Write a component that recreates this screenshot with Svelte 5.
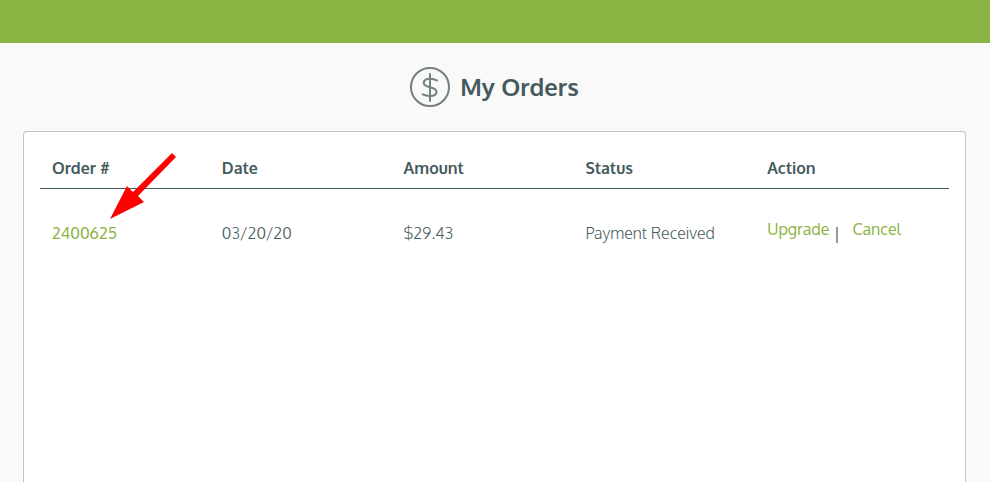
<script>
  const columns = ["Order #", "Date", "Amount", "Status", "Action"];

  const orders = [
    {
      number: "2400625",
      date: "03/20/20",
      amount: "$29.43",
      status: "Payment Received",
    },
  ];
</script>

<div class="page">
  <header class="topbar"></header>

  <main>
    <div class="title">
      <svg width="40" height="40" viewBox="0 0 40 40" aria-hidden="true">
        <circle cx="20" cy="20" r="19" />
        <path d="M20 7v27" />
        <path
          d="M27 13.500c-2-1.200-4.500-1.700-7-1.700-4 0-6.300 1.500-6.300 4 0 2.800 2.500 3.600 6.300 4.400s6.500 1.900 6.500 4.700c0 2.600-2.500 4-6.500 4-2.700 0-5.300-.5-7.300-1.600"
        />
      </svg>
      <h1>My Orders</h1>
    </div>

    <section class="panel">
      <table>
        <thead>
          <tr>
            {#each columns as column}
              <th scope="col">{column}</th>
            {/each}
          </tr>
        </thead>
        <tbody>
          {#each orders as order}
            <tr>
              <td>
                <a href="#order">{order.number}</a>
                <!-- Points at the order link -->
                <svg class="arrow" width="68" height="68" viewBox="0 0 68 68" aria-hidden="true">
                  <path d="M63 0l4 4-38 39 6 6-34 17 17-33 6 6z" />
                </svg>
              </td>
              <td>{order.date}</td>
              <td>{order.amount}</td>
              <td>{order.status}</td>
              <td>
                <div class="actions">
                  <a href="#upgrade">Upgrade</a>
                  <span class="divider"></span>
                  <a href="#cancel">Cancel</a>
                </div>
              </td>
            </tr>
          {/each}
        </tbody>
      </table>
    </section>
  </main>
</div>

<style>
  :global(body) {
    margin: 0;
    background: #f9f9f9;
  }

  .page {
    display: flex;
    flex-direction: column;
    min-height: 100vh;
    color: #455a5c;
    font-family: Oxygen, "Open Sans", "Noto Sans", sans-serif;
    font-size: 16px;
    line-height: 24px;
  }

  .topbar {
    height: 43px;
    background: #8ab441;
  }

  main {
    display: flex;
    flex: 1;
    flex-direction: column;
    padding: 24px 24px 0 23px;
  }

  .title {
    display: flex;
    align-items: center;
    justify-content: center;
    gap: 10px;
    margin-bottom: 24px;
  }

  .title svg {
    fill: none;
    stroke: #73807f;
    stroke-width: 2;
    stroke-linecap: round;
  }

  h1 {
    margin: 0;
    font-size: 24px;
    font-weight: 600;
    line-height: 40px;
  }

  .panel {
    flex: 1;
    padding: 16px;
    border: 1px solid #c3c3c3;
    border-bottom: none;
    border-radius: 4px 4px 0 0;
    background: #fff;
  }

  table {
    width: 100%;
    table-layout: fixed;
    border-collapse: collapse;
  }

  th,
  td {
    padding: 0;
    text-align: left;
    vertical-align: top;
  }

  th:first-child,
  td:first-child {
    padding-left: 12px;
  }

  th {
    height: 40px;
    padding-top: 8px;
    box-sizing: border-box;
    border-bottom: 1px solid #455a5c;
    font-weight: 600;
  }

  td {
    position: relative;
    padding-top: 32px;
    font-weight: 300;
  }

  a {
    color: #8ab441;
    font-weight: 400;
    text-decoration: none;
  }

  .arrow {
    position: absolute;
    top: -36px;
    left: 69px;
    fill: #f00;
  }

  .actions {
    display: flex;
    margin-top: -4px;
  }

  .divider {
    width: 2px;
    height: 16px;
    margin: 10px 14px 0 7px;
    background: #8f9b9c;
  }
</style>
